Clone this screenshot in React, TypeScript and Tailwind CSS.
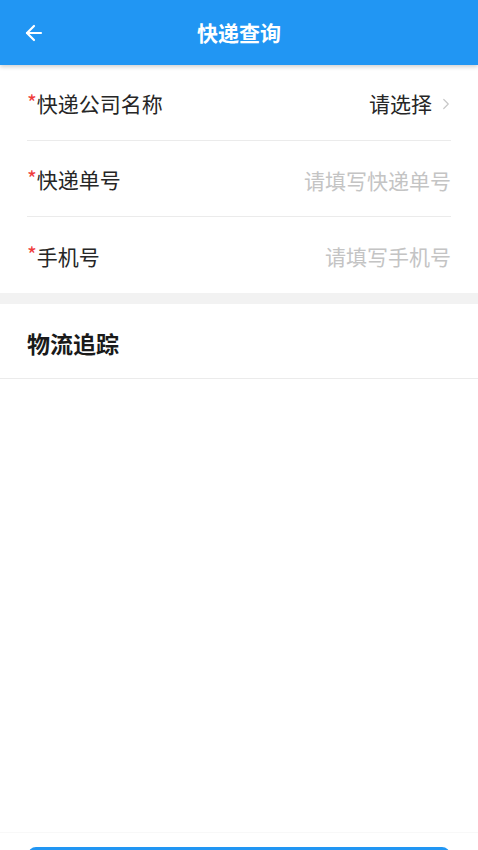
import { ArrowLeft, ChevronRight } from 'lucide-react';

const font = { fontFamily: '"Noto Sans CJK SC", "Noto Sans", sans-serif' };

function FormRow({ label, value, placeholder, last }: { label: string; value?: string; placeholder?: string; last?: boolean }) {
    return (
        <div className={`flex h-[76px] items-center justify-between pt-[2px] ${last ? '' : 'border-b border-[#ebebeb]'}`}>
            <div className="flex items-center text-[21px] leading-none text-[#262626]">
                <span className="-mt-[3px] text-[21px] text-[#ef3b3b]">*</span>
                <span>{label}</span>
            </div>
            {value ? (
                <div className="-mr-[4px] flex items-center gap-[5px] text-[21px] leading-none text-[#262626]">
                    <span>{value}</span>
                    <ChevronRight className="h-[18px] w-[18px] text-[#c8c8c8]" strokeWidth={1.6} />
                </div>
            ) : (
                <input
                    className="w-[200px] bg-transparent text-right text-[21px] leading-none text-[#262626] outline-none placeholder:text-[#c4c4c4]"
                    placeholder={placeholder}
                />
            )}
        </div>
    );
}

export default function App() {
    return (
        <div className="flex h-[850px] flex-col overflow-hidden bg-white" style={font}>
            <header className="relative z-10 flex h-[65px] shrink-0 items-center bg-[#2196f3] shadow-[0_2px_4px_rgba(0,0,0,0.18)]">
                <ArrowLeft className="ml-[22px] h-[24px] w-[24px] text-white" strokeWidth={2.2} />
                <h1 className="absolute left-1/2 -translate-x-1/2 text-[21px] font-bold text-white">快递查询</h1>
            </header>

            <div className="px-[27px]">
                <FormRow label="快递公司名称" value="请选择" />
                <FormRow label="快递单号" placeholder="请填写快递单号" />
                <FormRow label="手机号" placeholder="请填写手机号" last />
            </div>

            <div className="h-[11px] shrink-0 bg-[#f2f2f2]" />

            <div className="flex h-[75px] shrink-0 items-center border-b border-[#ebebeb] px-[27px] pt-[5px]">
                <h2 className="text-[23px] font-bold text-[#1a1a1a]">物流追踪</h2>
            </div>

            <div className="flex-1" />

            <div className="h-[18px] shrink-0 overflow-hidden border-t border-[#f8f8f8] px-[28px] pt-[14px]">
                <div className="h-[48px] w-full rounded-[8px] bg-[#2196f3]" />
            </div>
        </div>
    );
}
